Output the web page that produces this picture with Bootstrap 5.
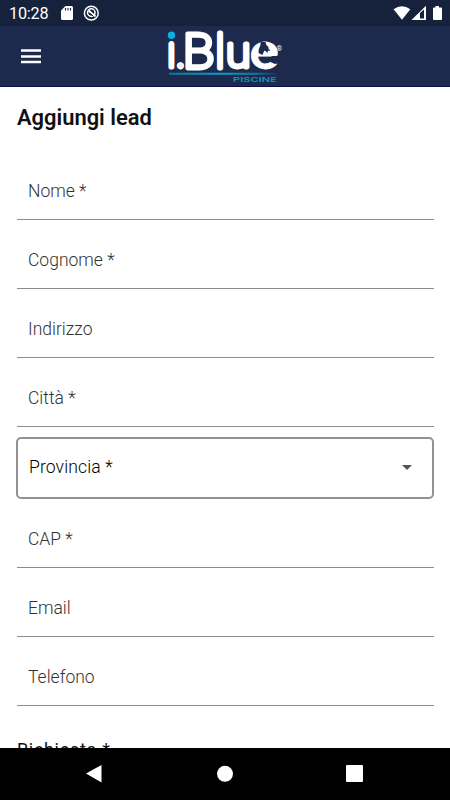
<!DOCTYPE html>
<html lang="it">
<head>
<meta charset="utf-8">
<meta name="viewport" content="width=device-width, initial-scale=1">
<title>Aggiungi lead</title>
<link href="https://cdn.jsdelivr.net/npm/bootstrap@5.3.0/dist/css/bootstrap.min.css" rel="stylesheet">
<style>
body{font-family:Roboto,"Liberation Sans",sans-serif;color:#111}
.app{height:800px;width:450px}
.statusbar{height:26px;background:#16213b;padding-left:9px;font-size:16.2px;line-height:28px;letter-spacing:-.2px}
.clock{width:39px;padding-top:1px}
.appbar{height:61px;background:#1d2a4d;border-bottom:1px solid #080f4c;padding-left:21px}
.logo{margin-left:120px}
.page-title{font-size:21.9px;line-height:28px;font-weight:600;margin:17px 0 19px}
.content{padding:0 16px 0 17px;min-height:0}
.form-line{height:69px;border-bottom:1px solid #8c8c8c;padding:27px 0 0 11px;font-size:17.5px;line-height:26px;color:#333;font-weight:330}
.select-box{height:62px;margin:10px 0 0 -1px;border:2px solid #929292;border-radius:5px;padding:0 20px 2px 11px;font-size:17.6px;font-weight:350;color:#000;letter-spacing:.1px}
.after{padding-top:31px;font-size:17.8px;line-height:26px;letter-spacing:.8px}
.sysnav{height:52px}
svg{display:block}
</style>
<script src="https://cdn.jsdelivr.net/npm/bootstrap@5.3.0/dist/js/bootstrap.bundle.min.js"></script>
</head>
<body class="bg-white overflow-hidden">
<div class="app d-flex flex-column">
  <div class="statusbar d-flex align-items-center text-white flex-shrink-0">
    <span class="clock">10:28</span>
    <svg width="54" height="26" viewBox="48 0 54 26"><path d="M65.500 6h6q1.500 0 1.500 1.500v11q0 1.500-1.500 1.500h-9q-1.500 0-1.500-1.500v-8z" fill="#fff"/><path d="M65.500 8v2.500M68 8v2.500M70.500 8v2.500" stroke="#16213b" stroke-width="1.100"/><circle cx="91.300" cy="13.200" r="6.900" fill="none" stroke="#fff" stroke-width="1.500"/><circle cx="91.300" cy="12.600" r="3.800" fill="none" stroke="#fff" stroke-width="1.500"/><path d="M88.500 10.500l7 6" stroke="#fff" stroke-width="2"/><path d="M90.500 13.500l3 3" stroke="#16213b"/></svg>
    <svg class="ms-auto" width="58" height="26" viewBox="392 0 58 26"><path d="M393.500 9.300Q402 3.200 410.300 9.300L402 19.800z" fill="#fff"/><path d="M411.500 20L426 5.700V20z" fill="#fff"/><path d="M420 18.500v-5.500l4-3.500v9z" fill="#16213b"/><path d="M435.500 6h3.500v1.500h2q1 0 1 1V19q0 1-1 1h-7q-1 0-1-1V8.500q0-1 1-1h1.500z" fill="#fff"/></svg>
  </div>
  <header class="appbar d-flex align-items-center flex-shrink-0">
    <svg width="20" height="20" viewBox="0 0 20 20"><path d="M0 4.500h20M0 10.500h20M0 16h20" stroke="#fff" stroke-width="2.300"/></svg>
    <svg class="logo" width="130" height="60" viewBox="161 26 130 60">
      <defs><linearGradient id="bar"><stop stop-color="#0878a0"/><stop offset=".5" stop-color="#08a0c8"/><stop offset=".8" stop-color="#08789c"/><stop offset="1" stop-color="#1d2a4d"/></linearGradient></defs>
      <g fill="#fff" font-family="Roboto, sans-serif" font-weight="100" stroke="#fff" stroke-width="4.800" stroke-linejoin="round" font-size="48">
        <text x="167" y="67.300" font-size="42">i</text>
        <text x="176.300" y="67.300" font-size="42">.</text>
        <text x="183" y="67.900" textLength="31" lengthAdjust="spacingAndGlyphs">B</text>
        <text x="215.200" y="67.900" font-size="46">l</text>
        <text x="226" y="67.300" font-size="42" textLength="24.500" lengthAdjust="spacingAndGlyphs">u</text>
        <text x="251.700" y="67.300" font-size="42" textLength="25" lengthAdjust="spacingAndGlyphs">e</text>
      </g>
      <path d="M166 29h11v12h-11z" fill="#1d2a4d"/><circle cx="171.500" cy="35.300" r="3.700" fill="#08b2e2"/>
      <path d="M260.500 42l5 0q0 3 3 5l-1 6-3-3-2 5-4-2q0-5 2-8zM272 56l8 0-1 7-4 1-7-3z" fill="#1d2a4d"/>
      <text x="276.500" y="50.500" font-family="Roboto, sans-serif" font-size="7" font-weight="500" fill="#fff">®</text>
      <path d="M169 72.700h109v2H169z" fill="url(#bar)"/>
      <text x="233" y="82.200" font-family="Inter, sans-serif" font-size="6.600" font-weight="600" fill="#0799c2" textLength="44" lengthAdjust="spacingAndGlyphs">PISCINE</text>
    </svg>
  </header>
  <main class="content flex-grow-1 overflow-hidden">
    <h1 class="page-title">Aggiungi lead</h1>
    <form>
      <div class="form-line">Nome *</div>
      <div class="form-line">Cognome *</div>
      <div class="form-line">Indirizzo</div>
      <div class="form-line">Città *</div>
      <div class="select-box d-flex align-items-center justify-content-between"><span>Provincia *</span><svg width="10" height="5"><path d="M0 0h10L5 5z" fill="#555"/></svg></div>
      <div class="form-line">CAP *</div>
      <div class="form-line">Email</div>
      <div class="form-line">Telefono</div>
      <div class="after">Richiesta *</div>
    </form>
  </main>
  <nav class="sysnav bg-black flex-shrink-0">
    <svg width="450" height="52" viewBox="0 748 450 52" fill="#fff"><path d="M86 773.500l15.500-8.500v17.500z"/><circle cx="225" cy="773.800" r="8"/><rect x="346" y="765" width="17" height="17" rx="1"/></svg>
  </nav>
</div>
</body>
</html>
